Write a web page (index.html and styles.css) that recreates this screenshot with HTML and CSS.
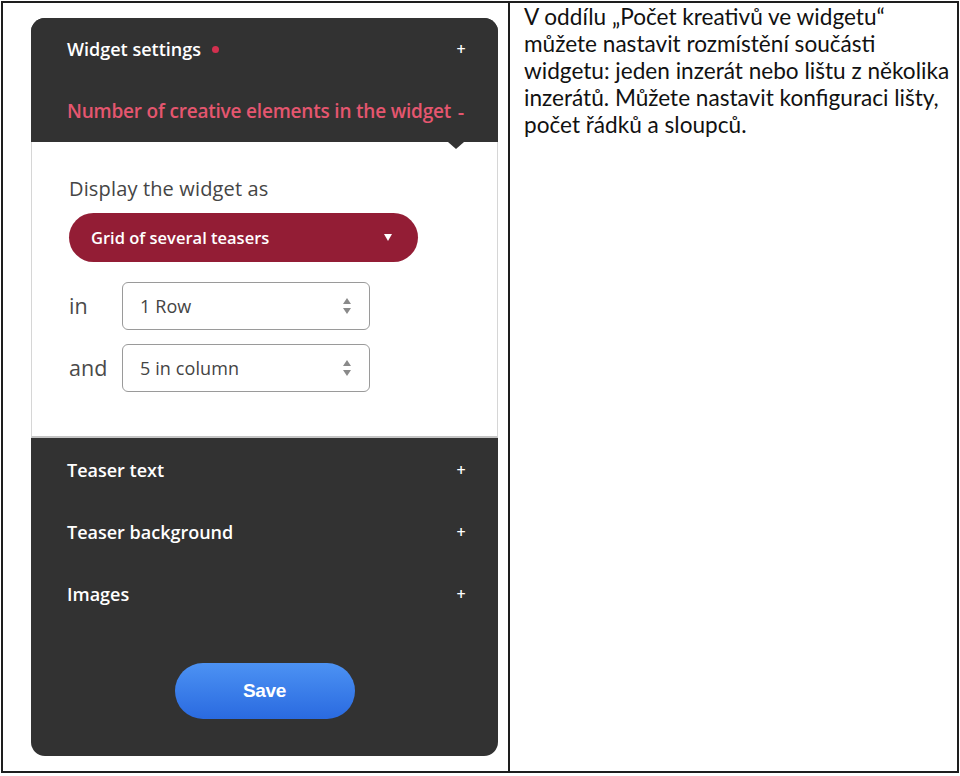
FILE: index.html
```html
<!DOCTYPE html>
<html lang="cs">
<head>
  <meta charset="UTF-8">
  <meta name="viewport" content="width=device-width, initial-scale=1.0">
  <title>Widget settings</title>
  <link rel="stylesheet" href="styles.css">
</head>
<body>
  <div class="sheet">
    <div class="cell cell-shot">
      <div class="panel">
        <div class="panel-head">
          <div class="row">
            <span class="row-title">Widget settings<i class="dot"></i></span>
            <span class="toggle">+</span>
          </div>
          <div class="row row-open">
            <span class="row-title">Number of creative elements in the widget</span>
            <span class="toggle">-</span>
          </div>
        </div>

        <div class="panel-body">
          <div class="label">Display the widget as</div>
          <div class="select">
            <span>Grid of several teasers</span>
            <span class="caret"></span>
          </div>
          <div class="field">
            <span class="field-label">in</span>
            <div class="spin">
              <span>1 Row</span>
              <svg class="spin-icon" width="10" height="18" viewBox="0 0 10 18"><path d="M5 1 L9 7 L1 7 Z M1 11 L9 11 L5 17 Z" fill="#8a8a8a"/></svg>
            </div>
          </div>
          <div class="field">
            <span class="field-label">and</span>
            <div class="spin">
              <span>5 in column</span>
              <svg class="spin-icon" width="10" height="18" viewBox="0 0 10 18"><path d="M5 1 L9 7 L1 7 Z M1 11 L9 11 L5 17 Z" fill="#8a8a8a"/></svg>
            </div>
          </div>
        </div>

        <div class="panel-foot">
          <div class="row"><span class="row-title">Teaser text</span><span class="toggle">+</span></div>
          <div class="row"><span class="row-title">Teaser background</span><span class="toggle">+</span></div>
          <div class="row"><span class="row-title">Images</span><span class="toggle">+</span></div>
          <div class="save-wrap">
            <button class="save">Save</button>
          </div>
        </div>
      </div>
    </div>

    <div class="cell cell-text">
      <p>V oddílu „Počet kreativů ve widgetu“<br>
      můžete nastavit rozmístění součásti<br>
      widgetu: jeden inzerát nebo lištu z několika<br>
      inzerátů. Můžete nastavit konfiguraci lišty,<br>
      počet řádků a sloupců.</p>
    </div>
  </div>
</body>
</html>
```

FILE: styles.css
```css
body {
  margin: 0;
  background: #fff;
  font-family: 'Open Sans', 'Noto Sans', sans-serif;
}

.sheet {
  display: grid;
  grid-template-columns: 507px 1fr;
  width: 958px;
  height: 772px;
  margin: 1px 0 0 1px;
  border: 2px solid #1e1e1e;
  box-sizing: border-box;
}

.cell-shot {
  border-right: 2px solid #1e1e1e;
  padding: 15px 0 0 28px;
}

.cell-text {
  padding: 0 0 0 14px;
}

.cell-text p {
  margin: 0;
  font-family: Lato, 'Liberation Sans', sans-serif;
  font-size: 22.6px;
  line-height: 27px;
  color: #111;
}

/* panel */
.panel {
  width: 467px;
  height: 738px;
  display: flex;
  flex-direction: column;
  border-radius: 14px;
  overflow: hidden;
  background: #323232;
}

.panel-head {
  position: relative;
  background: #323232;
}

.panel-head::after {
  content: "";
  position: absolute;
  right: 34px;
  bottom: -7px;
  border-left: 8px solid transparent;
  border-right: 8px solid transparent;
  border-top: 7px solid #323232;
}

.row {
  display: flex;
  align-items: center;
  justify-content: space-between;
  height: 62px;
  padding: 0 32px 0 36px;
  color: #fff;
}

.row-title {
  font-size: 18px;
  font-weight: 600;
  display: flex;
  align-items: center;
}

.row-open {
  color: #e5566f;
}

.row-open .row-title {
  font-size: 19px;
  letter-spacing: -0.2px;
}

.row-open .toggle {
  color: #e5566f;
  font-size: 20px;
}

.dot {
  width: 7px;
  height: 7px;
  border-radius: 50%;
  background: #d3304f;
  margin-left: 11px;
}

.toggle {
  font-size: 16px;
  font-weight: 600;
  width: 10px;
  text-align: center;
}

/* white body */
.panel-body {
  background: #fff;
  border-left: 1px solid #d6d6d6;
  border-right: 1px solid #d6d6d6;
  border-bottom: 2px solid #c4c4c4;
  padding: 35px 0 44px 37px;
}

.label {
  font-size: 20px;
  color: #454545;
  line-height: 24px;
  letter-spacing: 0.15px;
}

.select {
  display: flex;
  align-items: center;
  justify-content: space-between;
  width: 349px;
  height: 49px;
  box-sizing: border-box;
  margin-top: 12px;
  padding: 0 26px 0 22px;
  border-radius: 25px;
  background: #931d35;
  color: #fff;
  font-size: 16.5px;
  font-weight: 600;
}

.caret {
  border-left: 4.5px solid transparent;
  border-right: 4.5px solid transparent;
  border-top: 7px solid #fff;
}

.field {
  display: flex;
  align-items: center;
  margin-top: 20px;
}

.field + .field {
  margin-top: 14px;
}

.field-label {
  width: 53px;
  font-size: 21.5px;
  color: #4a4a4a;
  margin-top: -2px;
}

.spin {
  display: flex;
  align-items: center;
  justify-content: space-between;
  width: 248px;
  height: 48px;
  box-sizing: border-box;
  padding: 0 17px 0 17px;
  border: 1px solid #9a9a9a;
  border-radius: 6px;
  font-size: 18px;
  color: #444;
  letter-spacing: 0.1px;
}

/* dark foot */
.panel-foot {
  flex: 1;
  display: flex;
  flex-direction: column;
  padding-top: 1px;
}

.save-wrap {
  display: flex;
  justify-content: center;
  margin-top: 38px;
}

.save {
  width: 180px;
  height: 56px;
  border: none;
  border-radius: 28px;
  background: linear-gradient(to bottom, #4c92f3, #2a6ae0);
  color: #fff;
  font-family: 'Liberation Sans', Arial, sans-serif;
  font-size: 19px;
  font-weight: bold;
  letter-spacing: -0.3px;
  cursor: pointer;
}
```
